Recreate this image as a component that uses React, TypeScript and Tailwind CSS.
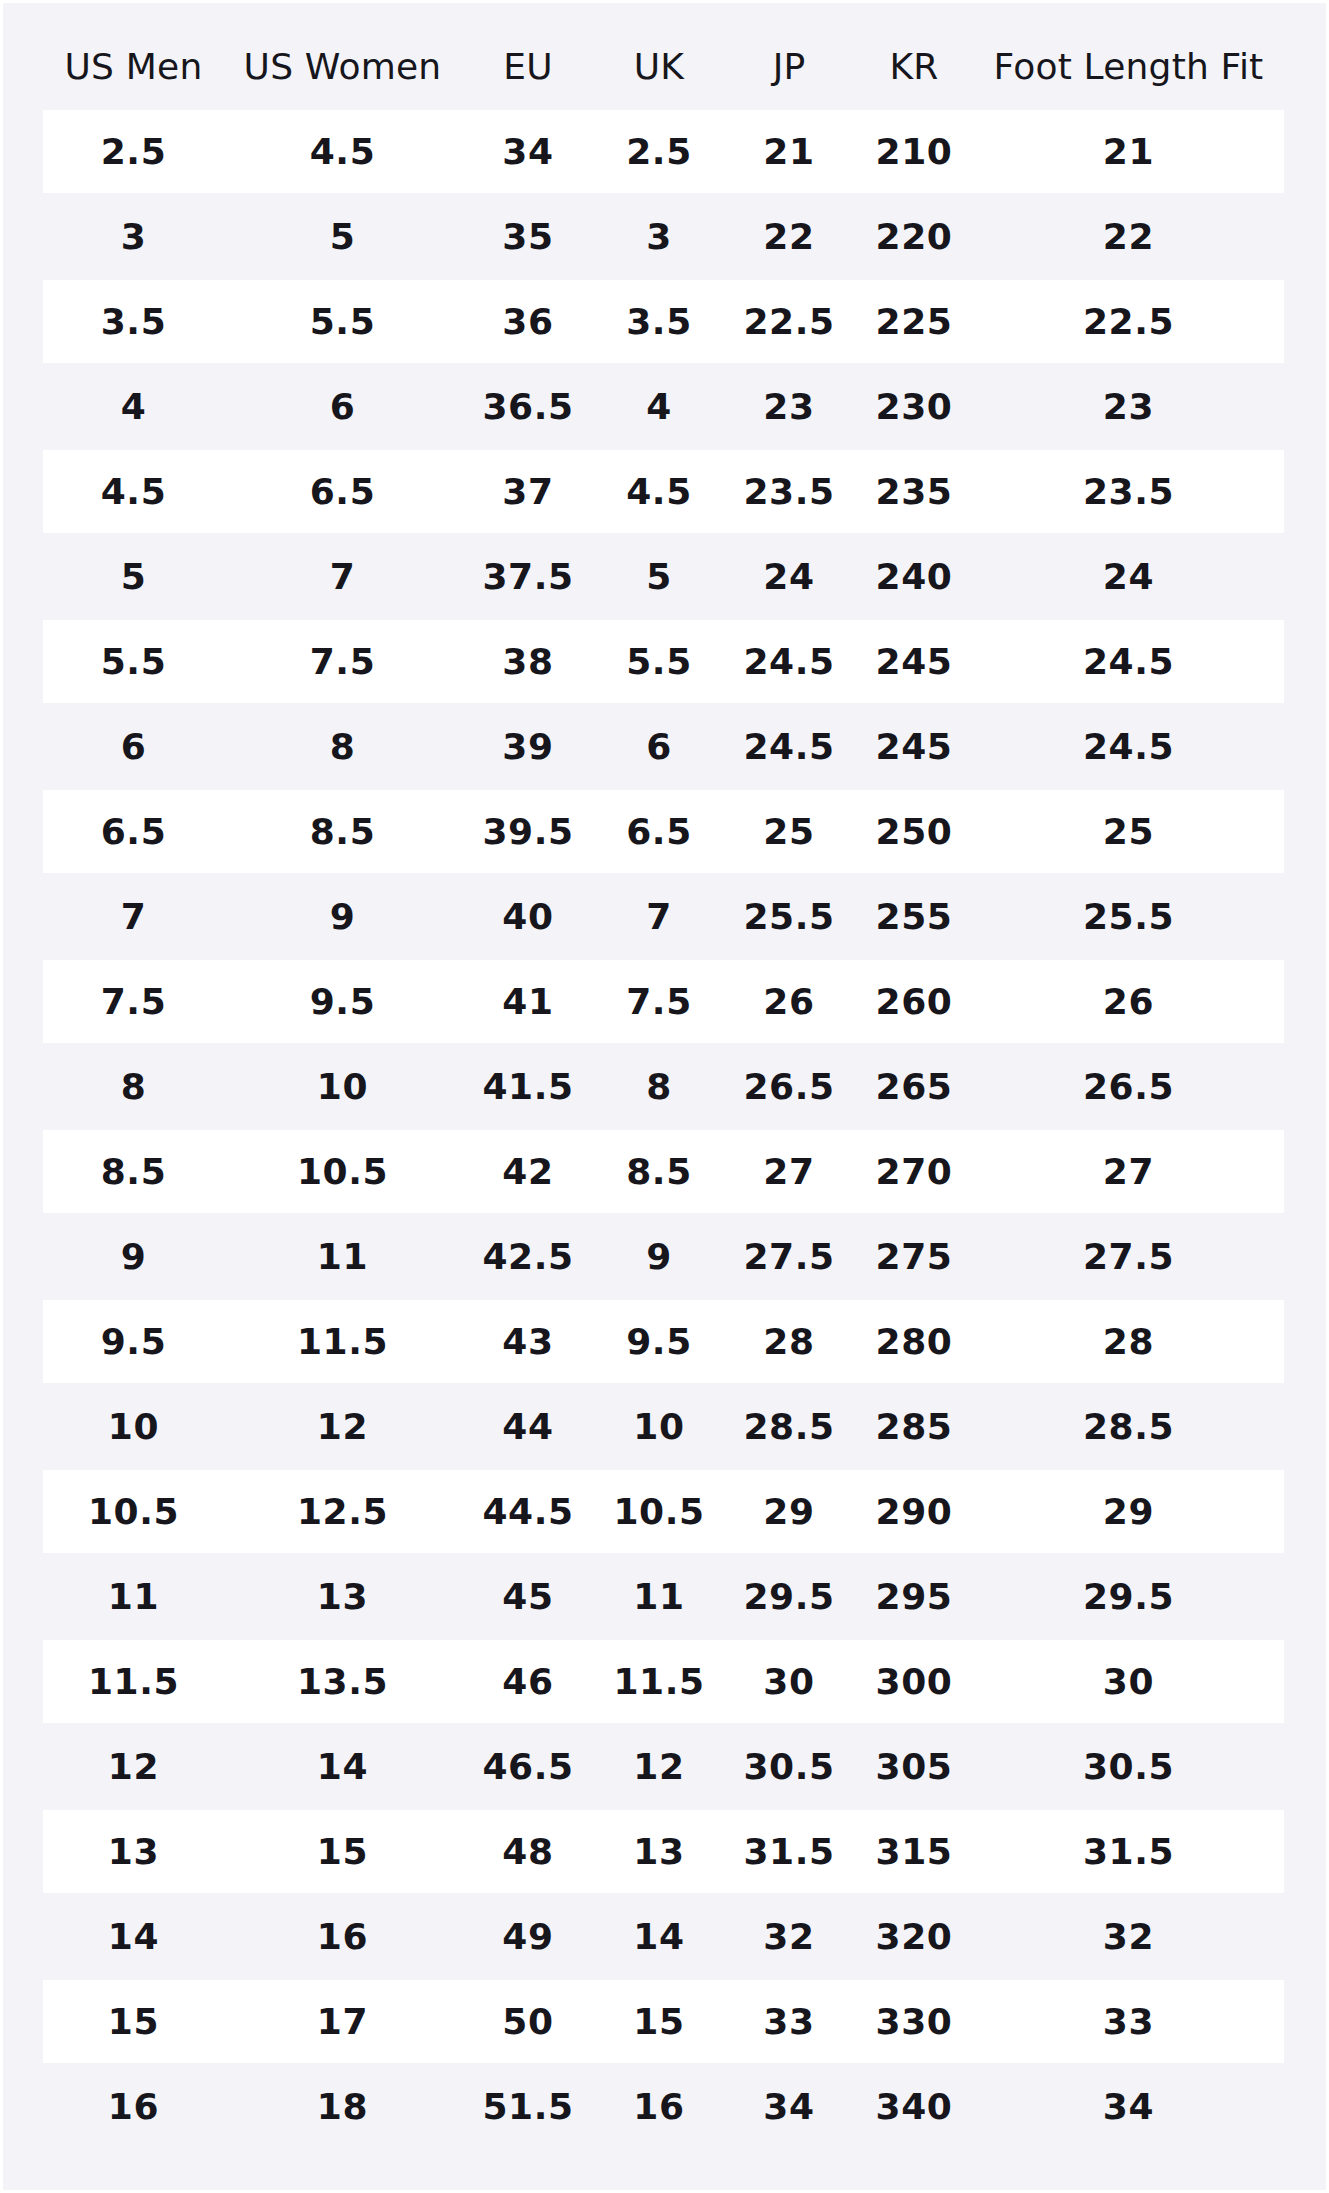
const headers = ["US Men", "US Women", "EU", "UK", "JP", "KR", "Foot Length Fit"];

const rows: string[][] = [
  ["2.5", "4.5", "34", "2.5", "21", "210", "21"],
  ["3", "5", "35", "3", "22", "220", "22"],
  ["3.5", "5.5", "36", "3.5", "22.5", "225", "22.5"],
  ["4", "6", "36.5", "4", "23", "230", "23"],
  ["4.5", "6.5", "37", "4.5", "23.5", "235", "23.5"],
  ["5", "7", "37.5", "5", "24", "240", "24"],
  ["5.5", "7.5", "38", "5.5", "24.5", "245", "24.5"],
  ["6", "8", "39", "6", "24.5", "245", "24.5"],
  ["6.5", "8.5", "39.5", "6.5", "25", "250", "25"],
  ["7", "9", "40", "7", "25.5", "255", "25.5"],
  ["7.5", "9.5", "41", "7.5", "26", "260", "26"],
  ["8", "10", "41.5", "8", "26.5", "265", "26.5"],
  ["8.5", "10.5", "42", "8.5", "27", "270", "27"],
  ["9", "11", "42.5", "9", "27.5", "275", "27.5"],
  ["9.5", "11.5", "43", "9.5", "28", "280", "28"],
  ["10", "12", "44", "10", "28.5", "285", "28.5"],
  ["10.5", "12.5", "44.5", "10.5", "29", "290", "29"],
  ["11", "13", "45", "11", "29.5", "295", "29.5"],
  ["11.5", "13.5", "46", "11.5", "30", "300", "30"],
  ["12", "14", "46.5", "12", "30.5", "305", "30.5"],
  ["13", "15", "48", "13", "31.5", "315", "31.5"],
  ["14", "16", "49", "14", "32", "320", "32"],
  ["15", "17", "50", "15", "33", "330", "33"],
  ["16", "18", "51.5", "16", "34", "340", "34"],
];

const cols = "grid grid-cols-[181px_237px_134px_128px_132px_118px_1fr] items-center h-[83px]";

export default function App() {
  return (
    <div className="bg-white p-[3px] font-['DejaVu_Sans',sans-serif] text-[#16161c]">
      <div className="bg-[#f4f4f8] pt-[22px] pb-[42px] pl-[40px] pr-[42px]">
        <div className="flex flex-col gap-[2px]">
          {/* Header */}
          <div className={cols}>
            {headers.map((h) => (
              <div key={h} className="text-center text-[36px] tracking-[0.2px] font-normal whitespace-nowrap">
                {h}
              </div>
            ))}
          </div>

          {/* Body rows, striped */}
          {rows.map((row, i) => (
            <div key={i} className={`${cols} ${i % 2 === 0 ? "bg-white" : ""}`}>
              {row.map((cell, j) => (
                <div key={j} className="text-center text-[36px] tracking-[0.6px] font-bold">
                  {cell}
                </div>
              ))}
            </div>
          ))}
        </div>
      </div>
    </div>
  );
}
